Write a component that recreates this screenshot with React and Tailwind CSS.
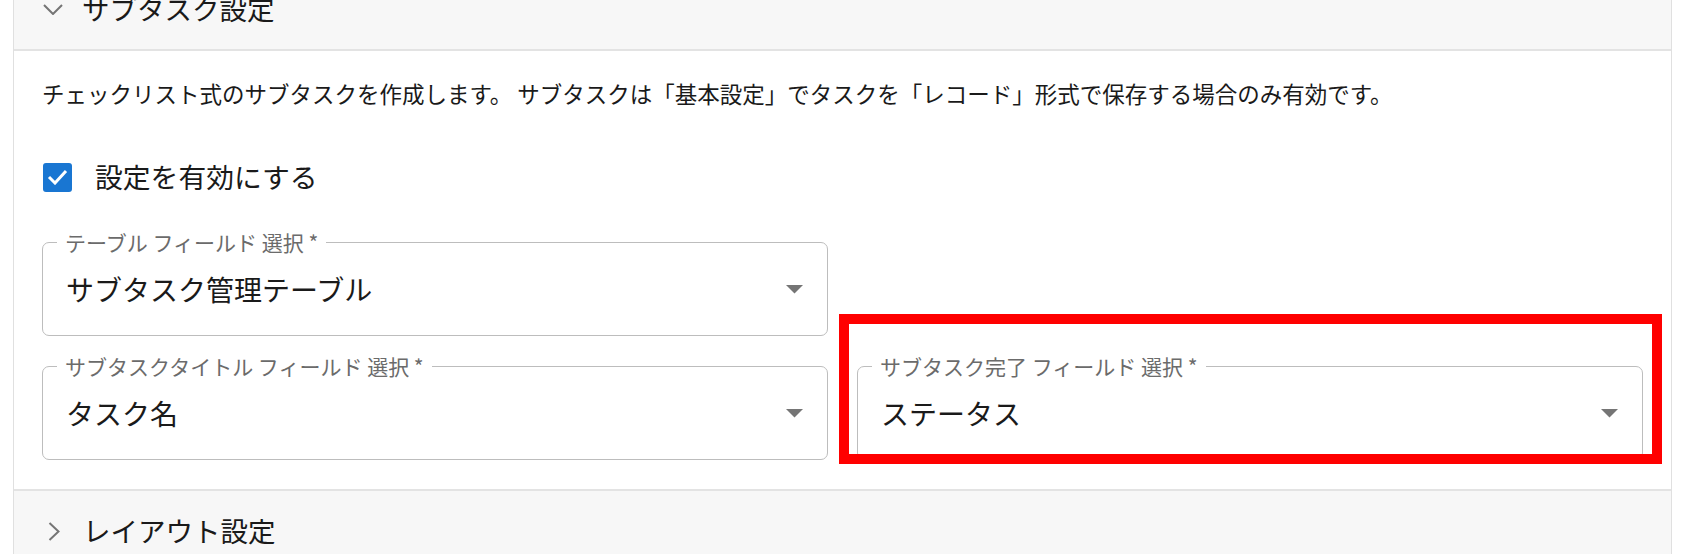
import React from 'react'

const FONT = { fontFamily: '"Noto Sans CJK JP", "Noto Sans", sans-serif' }

function ChevronDown() {
  return (
    <svg width="20" height="11" viewBox="0 0 20 11" fill="none">
      <path d="M1 1 L10 10 L19 1" stroke="#757575" strokeWidth="2" />
    </svg>
  )
}

function ChevronRight() {
  return (
    <svg width="12" height="19" viewBox="0 0 12 19" fill="none">
      <path d="M1.5 1 L10.5 9.5 L1.5 18" stroke="#757575" strokeWidth="2" />
    </svg>
  )
}

function SelectField({ label, value, highlight }) {
  return (
    <div className="relative">
      <div className="relative h-[94px] flex items-center justify-between pl-[23px] pr-[24px] rounded-[7px] border border-[#bdbdbd]">
        <span className="absolute -top-[13px] left-[14px] px-[8px] bg-white text-[21px] leading-[24px] text-[#6b6b6b]">
          {label}
        </span>
        <span className="text-[28px] leading-[36px] text-[#1a1a1a]">{value}</span>
        <svg width="17" height="9" viewBox="0 0 17 9">
          <path d="M0 0 L17 0 L8.5 8.5 Z" fill="#757575" />
        </svg>
      </div>
      {highlight && (
        <div className="absolute -left-[18px] -right-[19px] -top-[52px] -bottom-[4px] border-[10px] border-[#ff0000] pointer-events-none" />
      )}
    </div>
  )
}

export default function App() {
  return (
    <div className="min-h-screen bg-white overflow-hidden" style={FONT}>
      <div className="ml-[13px] w-[1659px] border-x border-[#e0e0e0]">
        {/* Subtask header */}
        <div className="-mt-[31px] h-[82px] flex items-center gap-[19px] pl-[29px] bg-[#f7f7f7] border-b-2 border-[#e3e3e3]">
          <ChevronDown />
          <span className="text-[27.5px] text-[#1a1a1a]">サブタスク設定</span>
        </div>

        {/* Body */}
        <div className="bg-white px-[28px] pt-[26px] pb-[29px]">
          <p className="text-[22.5px] leading-[33px] text-[#1a1a1a] whitespace-nowrap">
            チェックリスト式のサブタスクを作成します。 サブタスクは「基本設定」でタスクを「レコード」形式で保存する場合のみ有効です。
          </p>

          <label className="mt-[32px] h-[70px] flex items-center gap-[23px]">
            <span className="ml-[1px] w-[29px] h-[29px] rounded-[3px] bg-[#1976d2] flex items-center justify-center">
              <svg width="21" height="16" viewBox="0 0 21 16" fill="none">
                <path d="M2 8 L8 14 L19 2" stroke="white" strokeWidth="3" />
              </svg>
            </span>
            <span className="text-[27.8px] text-[#1a1a1a]">設定を有効にする</span>
          </label>

          <div className="mt-[30px] grid grid-cols-2 gap-x-[29px] gap-y-[30px]">
            <SelectField label="テーブル フィールド 選択 *" value="サブタスク管理テーブル" />
            <div />
            <SelectField label="サブタスクタイトル フィールド 選択 *" value="タスク名" />
            <SelectField label="サブタスク完了 フィールド 選択 *" value="ステータス" highlight />
          </div>
        </div>

        {/* Layout header */}
        <div className="h-[82px] flex items-center gap-[23px] pl-[34px] bg-[#f7f7f7] border-t-2 border-[#e3e3e3]">
          <ChevronRight />
          <span className="text-[27.5px] text-[#1a1a1a]">レイアウト設定</span>
        </div>
      </div>
    </div>
  )
}
